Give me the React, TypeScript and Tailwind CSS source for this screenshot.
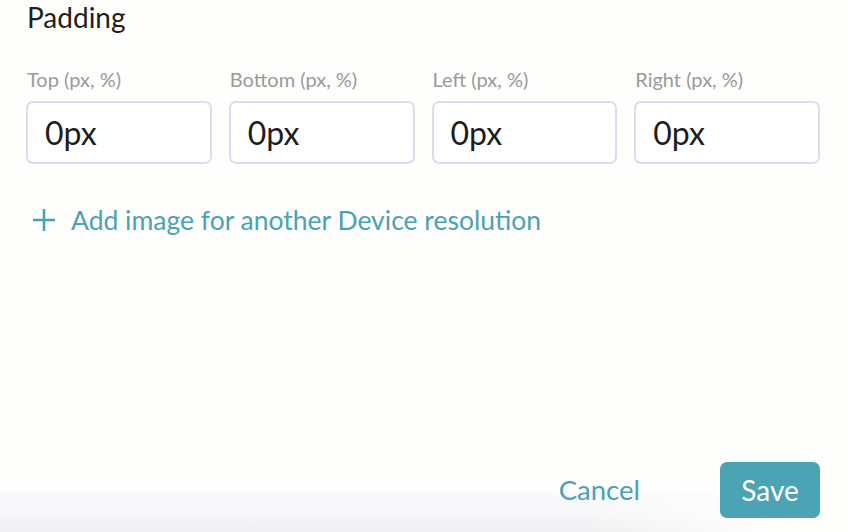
import React, { useState } from 'react';

const fields = [
  { key: 'top', label: 'Top (px, %)' },
  { key: 'bottom', label: 'Bottom (px, %)' },
  { key: 'left', label: 'Left (px, %)' },
  { key: 'right', label: 'Right (px, %)' },
];

const PaddingField: React.FC<{ label: string; value: string; onChange: (v: string) => void }> = ({
  label,
  value,
  onChange,
}) => (
  <label className="flex flex-col">
    <span className="pl-px text-[20px] leading-[24px] text-[#9a9a9a]">{label}</span>
    <input
      value={value}
      onChange={(e) => onChange(e.target.value)}
      className="mt-[10px] h-[63px] w-full rounded-[7px] border-2 border-[#d8dfec] bg-white px-[17px] text-[32px] text-[#1d1d1d] outline-none"
    />
  </label>
);

export default function App() {
  const [values, setValues] = useState<Record<string, string>>({
    top: '0px',
    bottom: '0px',
    left: '0px',
    right: '0px',
  });

  return (
    <div
      className="relative flex h-[532px] w-[848px] flex-col overflow-hidden bg-[#fefefd]"
      style={{ fontFamily: 'Lato, "Open Sans", sans-serif' }}
    >
      <div className="flex-1 pl-[26px] pr-[28px]">
        <h2 className="pl-px text-[28px] leading-[34px] text-[#1f1f1f]">Padding</h2>

        <div className="mt-[33px] grid grid-cols-4 gap-x-[17px]">
          {fields.map((f) => (
            <PaddingField
              key={f.key}
              label={f.label}
              value={values[f.key]}
              onChange={(v) => setValues({ ...values, [f.key]: v })}
            />
          ))}
        </div>

        <button className="mt-[40px] ml-[7px] flex items-center gap-[16px] text-[26.5px] leading-[32px] text-[#4aa3b3]">
          <svg width="22" height="22" viewBox="0 0 22 22" fill="none" stroke="currentColor" strokeWidth="2.6">
            <path d="M11 0v22M0 11h22" />
          </svg>
          <span>Add image for another Device resolution</span>
        </button>
      </div>

      {/* footer with faint fade under the actions */}
      <div className="relative h-[84px]">
        <div className="absolute inset-x-0 bottom-0 h-[40px] bg-gradient-to-b from-[#f9f9fc] via-[#f8f8fa] to-[#f0f0f2]" />
        <div className="absolute inset-y-0 right-0 w-[260px] bg-gradient-to-r from-transparent to-[#fefefd] to-70%" />
        <div className="relative flex items-center justify-end gap-[80px] pr-[28px] pt-[14px]">
          <button className="text-[27.5px] leading-[32px] text-[#4aa3b3]">Cancel</button>
          <button className="h-[56px] w-[100px] rounded-[7px] bg-[#4ba3b3] text-[28px] text-white">Save</button>
        </div>
      </div>
    </div>
  );
}
